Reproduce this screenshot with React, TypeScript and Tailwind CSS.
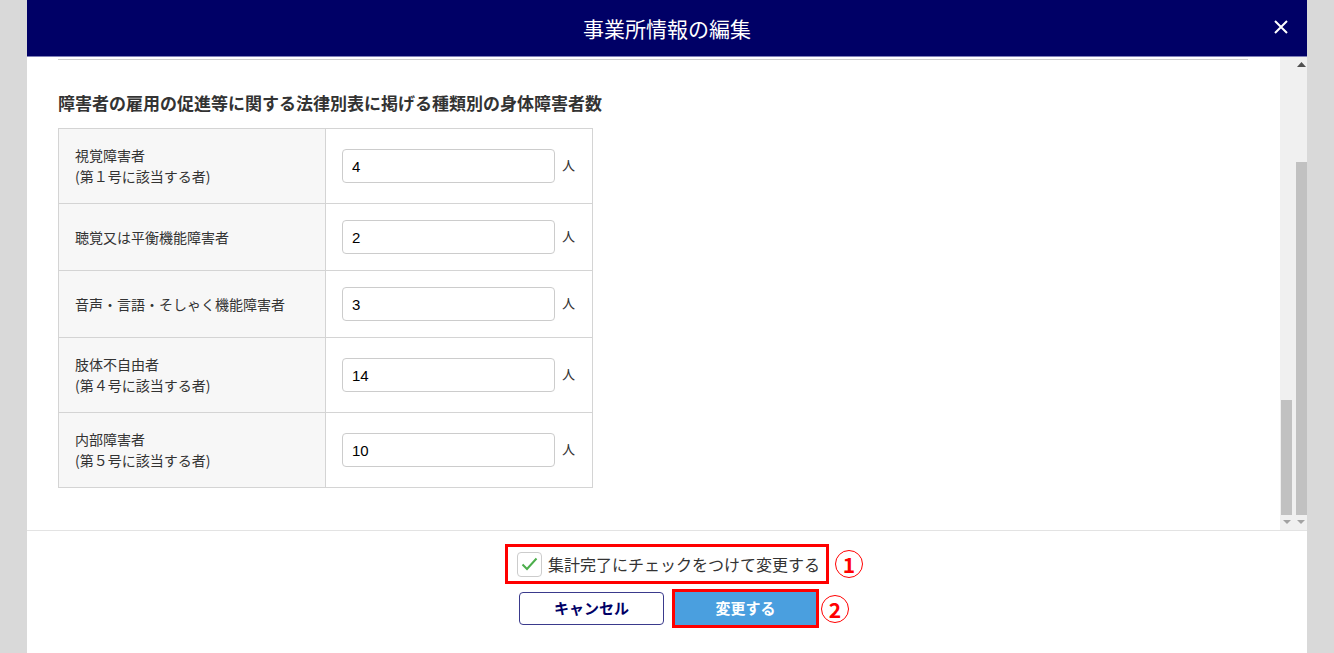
import React from "react";

type Row = { label: string[]; value: string; h: string };

const rows: Row[] = [
  { label: ["視覚障害者", "(第１号に該当する者)"], value: "4", h: "h-[75px]" },
  { label: ["聴覚又は平衡機能障害者"], value: "2", h: "h-[67px]" },
  { label: ["音声・言語・そしゃく機能障害者"], value: "3", h: "h-[67px]" },
  { label: ["肢体不自由者", "(第４号に該当する者)"], value: "14", h: "h-[75px]" },
  { label: ["内部障害者", "(第５号に該当する者)"], value: "10", h: "h-[75px]" },
];

function Circled({ n }: { n: string }) {
  return (
    <span className="flex h-[28px] w-[28px] items-center justify-center rounded-full border-[1.5px] border-[#ff0000] text-[21px] font-bold leading-none text-[#ff0000]">
      {n}
    </span>
  );
}

export default function App() {
  return (
    <div
      className="flex h-[653px] w-[1334px] justify-center overflow-hidden bg-[#d9d9d9]"
      style={{ fontFamily: '"Noto Sans CJK JP", "Noto Sans", sans-serif' }}
    >
      <div className="flex h-full w-[1280px] flex-col bg-white">
        {/* Header */}
        <div className="relative flex h-[57px] shrink-0 items-center justify-center border-b border-[#8080b8] bg-[#000066]">
          <h1 className="text-[21px] leading-none text-white">事業所情報の編集</h1>
          <button className="absolute right-[18px] top-[19px] text-white">
            <svg width="16" height="16" viewBox="0 0 16 16">
              <path d="M2 2 L14 14 M14 2 L2 14" stroke="white" strokeWidth="2" />
            </svg>
          </button>
        </div>

        {/* Body */}
        <div className="flex h-[473px] shrink-0">
          <div className="flex-1 pl-[31px] pr-[32px]">
            <div className="mt-[2px] h-[1px] bg-[#cccccc]" />
            <h2 className="mt-[31px] text-[17px] font-bold leading-[24px] text-[#333]">
              障害者の雇用の促進等に関する法律別表に掲げる種類別の身体障害者数
            </h2>
            <table className="mt-[13px] w-[535px] border-collapse text-[14px] text-[#333]">
              <tbody>
                {rows.map((r, i) => (
                  <tr key={i} className={r.h}>
                    <td className="w-[267px] border border-[#d4d4d4] bg-[#f7f7f7] pl-[16px] align-middle leading-[21px]">
                      {r.label.map((l, j) => (
                        <div key={j}>{l}</div>
                      ))}
                    </td>
                    <td className="border border-[#d4d4d4] pl-[16px] align-middle">
                      <div className="flex items-center">
                        <input
                          defaultValue={r.value}
                          className="h-[34px] w-[213px] rounded-[4px] border border-[#cccccc] px-[9px] text-[15px] text-black outline-none"
                          style={{ fontFamily: '"Liberation Sans", Arial, sans-serif' }}
                        />
                        <span className="ml-[7px] -mt-[2px] text-[13px] text-[#333]">人</span>
                      </div>
                    </td>
                  </tr>
                ))}
              </tbody>
            </table>
          </div>

          {/* Scrollbars */}
          <div className="relative w-[27px] bg-[#f0f0f0]">
            <svg className="absolute left-[17px] top-[5px]" width="9" height="5" viewBox="0 0 9 5">
              <path d="M0 5 L4.5 0 L9 5 Z" fill="#505050" />
            </svg>
            <div className="absolute left-[1px] top-[343px] h-[115px] w-[11px] bg-[#c1c1c1]" />
            <div className="absolute left-[16px] top-[105px] h-[353px] w-[11px] bg-[#c1c1c1]" />
            <svg className="absolute left-[3px] top-[463px]" width="8" height="4" viewBox="0 0 8 4">
              <path d="M0 0 L8 0 L4 4 Z" fill="#a3a3a3" />
            </svg>
            <svg className="absolute left-[17px] top-[463px]" width="8" height="4" viewBox="0 0 8 4">
              <path d="M0 0 L8 0 L4 4 Z" fill="#a3a3a3" />
            </svg>
          </div>
        </div>

        {/* Footer */}
        <div className="flex flex-1 flex-col items-center border-t border-[#e3e3e3] pt-[13px]">
          <div className="relative">
            <label className="flex h-[40px] items-center border-[3px] border-[#ff0000] pl-[9px] pr-[6px]">
              <span className="flex h-[25px] w-[25px] items-center justify-center rounded-[4px] border border-[#cccccc] bg-white">
                <svg width="17" height="14" viewBox="0 0 17 14">
                  <path d="M1.5 7.5 L6 12 L15.5 1.5" fill="none" stroke="#4cae4c" strokeWidth="2" />
                </svg>
              </span>
              <span className="ml-[6px] text-[16px] leading-none text-[#333]">
                集計完了にチェックをつけて変更する
              </span>
            </label>
            <div className="absolute left-[calc(100%+6px)] top-[6px]">
              <Circled n="1" />
            </div>
          </div>

          <div className="relative mt-[5px] ml-[4px] flex items-center">
            <button className="mt-[3px] h-[33px] w-[145px] self-start rounded-[4px] border border-[#3a3a8c] bg-white text-[15px] font-bold text-[#000066]">
              キャンセル
            </button>
            <div className="ml-[8px] border-[3px] border-[#ff0000]">
              <button className="block h-[33px] w-[141px] bg-[#4a9fdf] text-[15px] font-bold text-white">
                変更する
              </button>
            </div>
            <div className="absolute left-[calc(100%+2px)] top-[6px]">
              <Circled n="2" />
            </div>
          </div>
        </div>
      </div>
    </div>
  );
}
